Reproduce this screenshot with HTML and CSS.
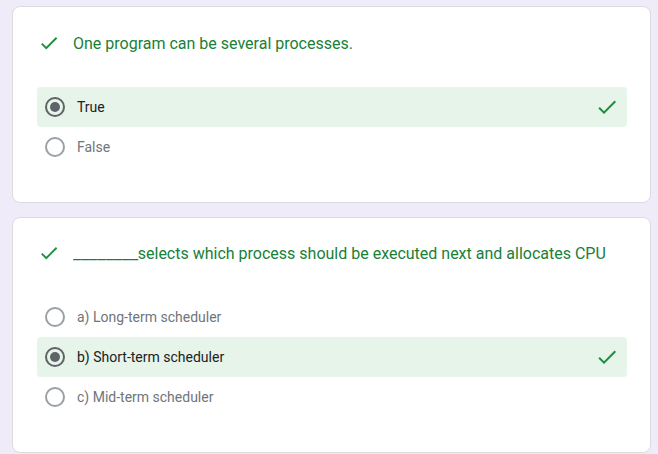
FILE: index.html
```html
<!DOCTYPE html>
<html>
<head>
<meta charset="utf-8">
<link rel="stylesheet" href="styles.css">
</head>
<body>
<div class="card">
  <div class="q-head">
    <svg class="q-check" width="22" height="22" viewBox="0 0 24 24"><path d="M9 16.17L4.83 12l-1.42 1.41L9 19 21 7l-1.41-1.41z"/></svg>
    <span class="q-title">One program can be several processes.</span>
  </div>
  <div class="options">
    <div class="opt correct">
      <span class="radio on"></span>
      <span class="label">True</span>
      <svg class="opt-check" width="24" height="24" viewBox="0 0 24 24"><path d="M9 16.17L4.83 12l-1.42 1.41L9 19 21 7l-1.41-1.41z"/></svg>
    </div>
    <div class="opt">
      <span class="radio"></span>
      <span class="label muted">False</span>
    </div>
  </div>
</div>
<div class="card second">
  <div class="q-head">
    <svg class="q-check" width="22" height="22" viewBox="0 0 24 24"><path d="M9 16.17L4.83 12l-1.42 1.41L9 19 21 7l-1.41-1.41z"/></svg>
    <span class="q-title"><span class="blank">________</span>selects which process should be executed next and allocates CPU</span>
  </div>
  <div class="options">
    <div class="opt">
      <span class="radio"></span>
      <span class="label muted">a) Long-term scheduler</span>
    </div>
    <div class="opt correct">
      <span class="radio on"></span>
      <span class="label">b) Short-term scheduler</span>
      <svg class="opt-check" width="24" height="24" viewBox="0 0 24 24"><path d="M9 16.17L4.83 12l-1.42 1.41L9 19 21 7l-1.41-1.41z"/></svg>
    </div>
    <div class="opt">
      <span class="radio"></span>
      <span class="label muted">c) Mid-term scheduler</span>
    </div>
  </div>
</div>
</body>
</html>
```
FILE: styles.css
```css
html, body {
  margin: 0;
  background: #f0ebf8;
}
body {
  padding: 6px 7px 0 12px;
  font-family: Roboto, "Liberation Sans", Arial, sans-serif;
  display: flex;
  flex-direction: column;
  gap: 14px;
}
.card {
  background: #fff;
  border: 1px solid #dadce0;
  border-radius: 8px;
  padding: 24px 23px 35px 24px;
}
.card.second {
  padding-top: 23px;
}
.q-head {
  display: flex;
  align-items: center;
  height: 24px;
  margin-bottom: 32px;
}
.q-check {
  fill: #1e8e3e;
  margin-left: 1px;
  margin-right: 13px;
  flex: none;
}
.q-title {
  font-size: 16px;
  color: #188038;
  white-space: nowrap;
}
.blank {
  display: inline-block;
  transform: scaleX(1.13);
  transform-origin: left center;
  margin-right: 7px;
}
.options {
  display: flex;
  flex-direction: column;
}
.opt {
  display: flex;
  align-items: center;
  height: 40px;
  padding: 0 8px;
  border-radius: 4px;
}
.opt.correct {
  background: #e6f4ea;
}
.radio {
  box-sizing: border-box;
  width: 20px;
  height: 20px;
  border: 2px solid #9aa0a6;
  border-radius: 50%;
  flex: none;
  display: flex;
  align-items: center;
  justify-content: center;
}
.radio.on {
  border-color: #5f6368;
}
.radio.on::after {
  content: "";
  width: 10px;
  height: 10px;
  border-radius: 50%;
  background: #5f6368;
}
.label {
  margin-left: 12px;
  font-size: 14px;
  color: #202124;
  flex: 1;
}
.label.muted {
  color: #70757a;
}
.opt-check {
  fill: #1e8e3e;
  flex: none;
}
```
